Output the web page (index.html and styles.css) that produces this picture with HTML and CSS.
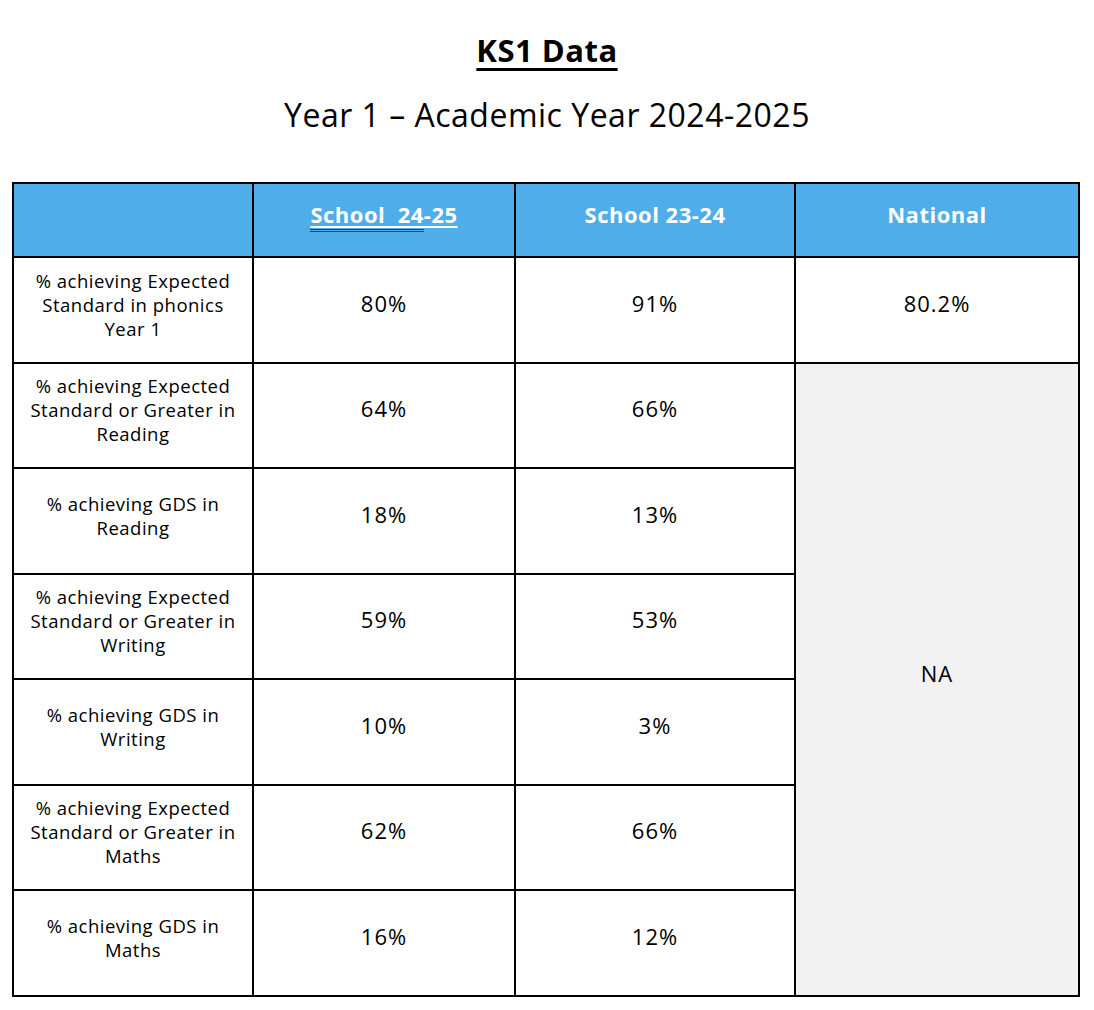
FILE: index.html
```html
<!DOCTYPE html>
<html>
<head>
<meta charset="utf-8">
<link rel="stylesheet" href="styles.css">
</head>
<body>
<div class="page">
  <h1 class="title">KS1 Data</h1>
  <h2 class="subtitle">Year 1 – Academic Year 2024-2025</h2>
  <table class="data">
    <colgroup>
      <col class="c1"><col class="c2"><col class="c3"><col class="c4">
    </colgroup>
    <thead>
      <tr class="head">
        <th></th>
        <th><span class="link"><span class="spell">School&nbsp; 24</span>-25</span></th>
        <th>School 23-24</th>
        <th>National</th>
      </tr>
    </thead>
    <tbody>
      <tr>
        <td class="label">% achieving Expected Standard in phonics Year 1</td>
        <td class="num">80%</td>
        <td class="num">91%</td>
        <td class="num">80.2%</td>
      </tr>
      <tr>
        <td class="label">% achieving Expected Standard or Greater in Reading</td>
        <td class="num">64%</td>
        <td class="num">66%</td>
        <td class="num na" rowspan="6">NA</td>
      </tr>
      <tr>
        <td class="label">% achieving GDS in Reading</td>
        <td class="num">18%</td>
        <td class="num">13%</td>
      </tr>
      <tr>
        <td class="label">% achieving Expected Standard or Greater in Writing</td>
        <td class="num">59%</td>
        <td class="num">53%</td>
      </tr>
      <tr>
        <td class="label">% achieving GDS in Writing</td>
        <td class="num">10%</td>
        <td class="num">3%</td>
      </tr>
      <tr>
        <td class="label">% achieving Expected Standard or Greater in Maths</td>
        <td class="num">62%</td>
        <td class="num">66%</td>
      </tr>
      <tr>
        <td class="label">% achieving GDS in Maths</td>
        <td class="num">16%</td>
        <td class="num">12%</td>
      </tr>
    </tbody>
  </table>
</div>
</body>
</html>
```
FILE: styles.css
```css
html, body {
  margin: 0;
  padding: 0;
  background: #ffffff;
}
body {
  font-family: "Open Sans", "Noto Sans", sans-serif;
  color: #000;
}
.page {
  padding-top: 30px;
}
.title {
  margin: 0;
  text-align: center;
  font-size: 31px;
  line-height: 40px;
  font-weight: 700;
  letter-spacing: 0.5px;
  text-decoration: underline;
  text-decoration-thickness: 2.5px;
  text-underline-offset: 6px;
}
.subtitle {
  margin: 25px 0 0;
  text-align: center;
  font-size: 32px;
  line-height: 40px;
  font-weight: 400;
  letter-spacing: 0.5px;
}
.data {
  margin: 47px 0 0 12px;
  width: 1066px;
  border-collapse: collapse;
  table-layout: fixed;
}
.c1 { width: 240px; }
.c2 { width: 262px; }
.c3 { width: 280px; }
.c4 { width: 284px; }
.data th, .data td {
  border: 2px solid #000;
  text-align: center;
  vertical-align: middle;
  padding: 0 10px;
}
.data .head th {
  height: 60px;
  background: #4fadea;
  color: #fff;
  font-size: 22px;
  font-weight: 700;
  letter-spacing: 0.5px;
  padding-bottom: 12px;
}
.link {
  text-decoration: underline;
  text-decoration-color: #fff;
  text-underline-offset: 3px;
}
.spell {
  border-bottom: 3px double #1a3aa0;
  padding-bottom: 0;
}
.data tbody tr {
  height: 105.5px;
}
.data .label {
  font-size: 18.5px;
  line-height: 24px;
  letter-spacing: 0.5px;
  padding: 0 10px 10px;
}
.data .num {
  font-size: 22px;
  letter-spacing: 1px;
  padding-bottom: 14px;
}
.data .na {
  background: #f2f2f2;
  padding-bottom: 12px;
}
```
